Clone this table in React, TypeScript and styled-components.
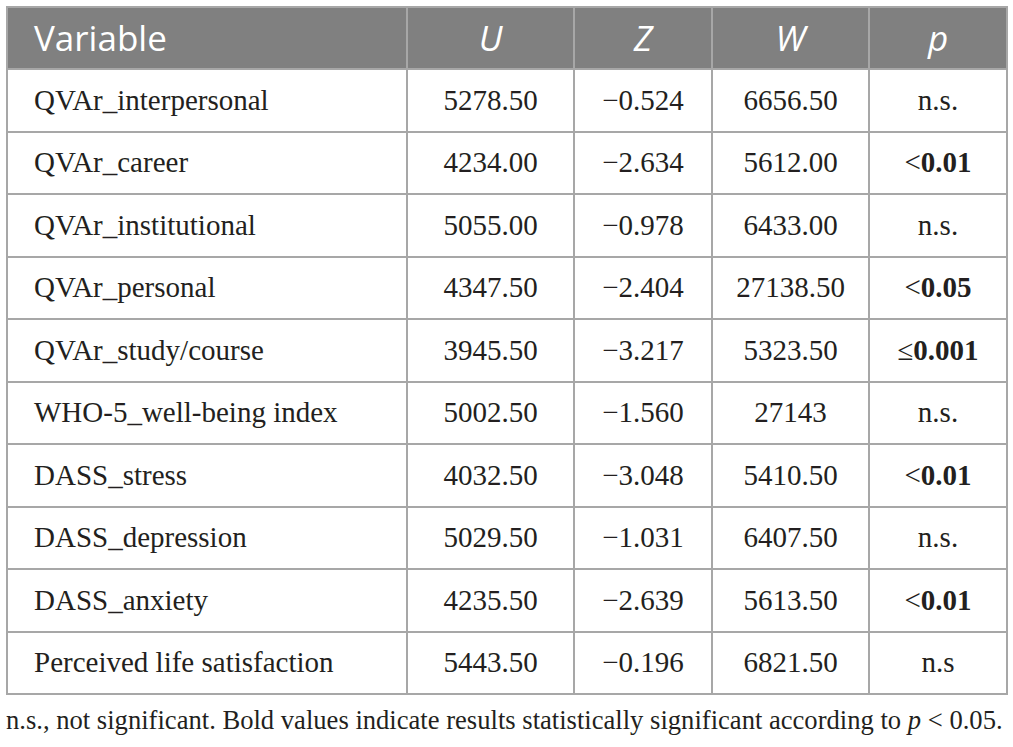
import styled, { createGlobalStyle } from "styled-components";

const GlobalStyle = createGlobalStyle`
  body {
    margin: 0;
    background: #ffffff;
    font-family: "Liberation Serif", "Times New Roman", serif;
    color: #231f20;
  }
`;

const Page = styled.div`
  padding: 6px 7px 0 6px;
`;

const Table = styled.table`
  width: 1000px;
  border-collapse: collapse;
  table-layout: fixed;
  border: 2px solid #a7a7a7;
`;

const HeadCell = styled.th<{ $left?: boolean }>`
  height: 62px;
  box-sizing: border-box;
  background: #808080;
  color: #ffffff;
  font-family: "Open Sans", "Liberation Sans", sans-serif;
  font-weight: 400;
  font-size: 35px;
  font-style: ${(p) => (p.$left ? "normal" : "italic")};
  text-align: ${(p) => (p.$left ? "left" : "center")};
  padding: 0 0 2px ${(p) => (p.$left ? 26 : 0)}px;
  border: 2px solid #a7a7a7;
  line-height: 1;
`;

const Cell = styled.td<{ $left?: boolean }>`
  height: 62.5px;
  box-sizing: border-box;
  font-size: 29px;
  text-align: ${(p) => (p.$left ? "left" : "center")};
  padding: 0 0 0 ${(p) => (p.$left ? 26 : 0)}px;
  border: 2px solid #a7a7a7;
  line-height: 1;
  white-space: nowrap;
`;

const Strong = styled.b`
  font-weight: 700;
`;

const Note = styled.p`
  margin: 10px 0 0 0;
  font-size: 26.6px;
  white-space: nowrap;
`;

const Ital = styled.i`
  font-style: italic;
`;

const widths = [400, 167, 138, 157, 138];

const rows = [
  ["QVAr_interpersonal", "5278.50", "\u22120.524", "6656.50", "", "n.s."],
  ["QVAr_career", "4234.00", "\u22122.634", "5612.00", "<", "0.01"],
  ["QVAr_institutional", "5055.00", "\u22120.978", "6433.00", "", "n.s."],
  ["QVAr_personal", "4347.50", "\u22122.404", "27138.50", "<", "0.05"],
  ["QVAr_study/course", "3945.50", "\u22123.217", "5323.50", "\u2264", "0.001"],
  ["WHO-5_well-being index", "5002.50", "\u22121.560", "27143", "", "n.s."],
  ["DASS_stress", "4032.50", "\u22123.048", "5410.50", "<", "0.01"],
  ["DASS_depression", "5029.50", "\u22121.031", "6407.50", "", "n.s."],
  ["DASS_anxiety", "4235.50", "\u22122.639", "5613.50", "<", "0.01"],
  ["Perceived life satisfaction", "5443.50", "\u22120.196", "6821.50", "", "n.s"],
];

export default function App() {
  return (
    <Page>
      <GlobalStyle />
      <Table>
        <colgroup>
          {widths.map((w, i) => (
            <col key={i} style={{ width: w }} />
          ))}
        </colgroup>
        <thead>
          <tr>
            <HeadCell $left>Variable</HeadCell>
            <HeadCell>U</HeadCell>
            <HeadCell>Z</HeadCell>
            <HeadCell>W</HeadCell>
            <HeadCell>p</HeadCell>
          </tr>
        </thead>
        <tbody>
          {rows.map((r) => (
            <tr key={r[0]}>
              <Cell $left>{r[0]}</Cell>
              <Cell>{r[1]}</Cell>
              <Cell>{r[2]}</Cell>
              <Cell>{r[3]}</Cell>
              <Cell>
                {r[4] ? (
                  <>
                    {r[4]}
                    <Strong>{r[5]}</Strong>
                  </>
                ) : (
                  r[5]
                )}
              </Cell>
            </tr>
          ))}
        </tbody>
      </Table>
      <Note>
        n.s., not significant. Bold values indicate results statistically significant according to <Ital>p</Ital> &lt; 0.05.
      </Note>
    </Page>
  );
}
